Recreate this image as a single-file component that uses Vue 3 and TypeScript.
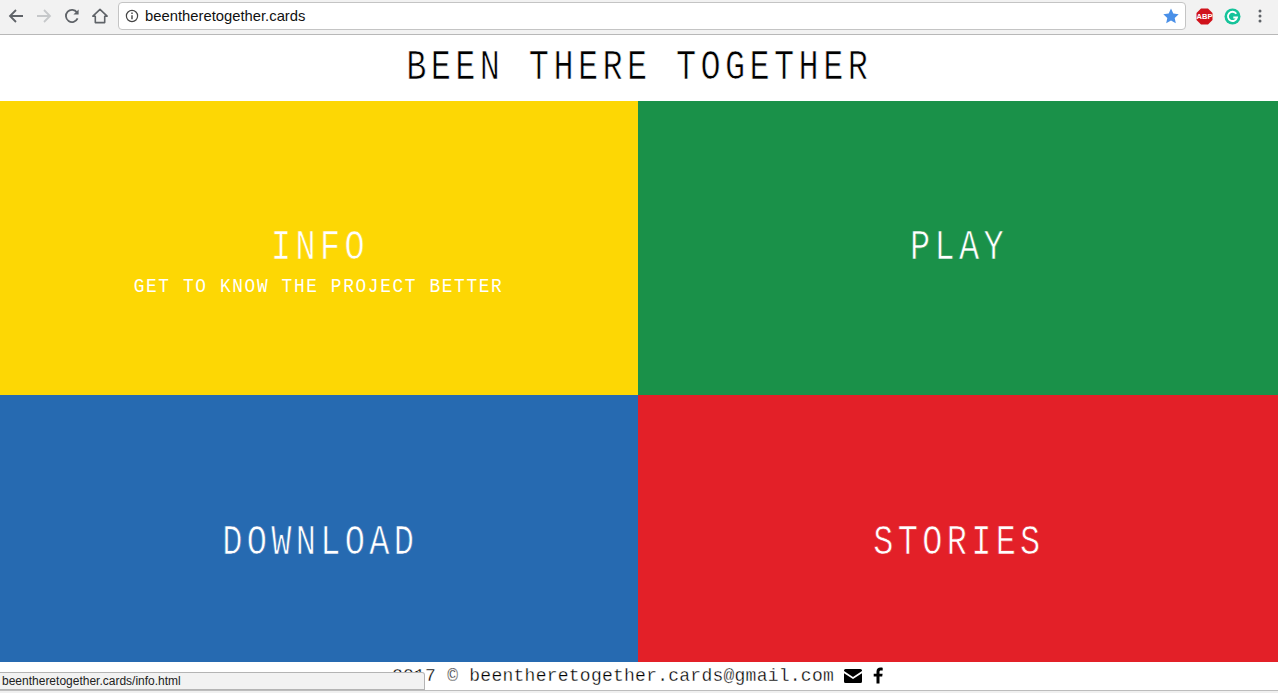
<script setup lang="ts">
interface Tile { title: string; sub?: string; tone: string }
const tiles: Tile[] = [
  { title: 'INFO', sub: 'GET TO KNOW THE PROJECT BETTER', tone: 'yellow' },
  { title: 'PLAY', tone: 'green' },
  { title: 'DOWNLOAD', tone: 'blue' },
  { title: 'STORIES', tone: 'red' },
]
</script>

<template>
  <div class="window">
    <div class="toolbar">
      <div class="nav">
        <svg width="16" height="16" viewBox="0 0 16 16"><path d="M15 8H2.500M8 2 2 8l6 6" fill="none" stroke="#5f6368" stroke-width="1.800"/></svg>
        <svg width="16" height="16" viewBox="0 0 16 16"><path d="M1 8h12.500M8 2l6 6-6 6" fill="none" stroke="#c6c8ca" stroke-width="1.800"/></svg>
        <svg width="16" height="16" viewBox="0 0 16 16"><path d="M13.600 10.400A6.100 6.100 0 1 1 13 4.400" fill="none" stroke="#5f6368" stroke-width="1.800"/><path d="M14.600 1.400v5.200H9.400z" fill="#5f6368"/></svg>
        <svg width="16" height="16" viewBox="0 0 16 16"><path d="M8 1.400.9 8.200h2.400v6.400h9.400V8.200h2.400z" fill="none" stroke="#5f6368" stroke-width="1.600" stroke-linejoin="round"/></svg>
      </div>
      <div class="omnibox">
        <svg width="14" height="14" viewBox="0 0 14 14"><circle cx="7" cy="7" r="5.600" fill="none" stroke="#444" stroke-width="1.200"/><path d="M7 6.200v4M7 3.600v1.500" stroke="#444" stroke-width="1.400"/></svg>
        <span class="url">beentheretogether.cards</span>
        <svg class="star" width="16" height="16" viewBox="0 0 16 16"><path d="M8 .6l2.300 5 5.400.6-4 3.700 1.100 5.400L8 12.600l-4.800 2.700 1.100-5.400-4-3.700 5.400-.6z" fill="#4a90e8"/></svg>
      </div>
      <div class="extensions">
        <svg width="17" height="17" viewBox="0 0 17 17"><path d="M5 .5h7L16.500 5v7L12 16.500H5L.5 12V5z" fill="#d0121b"/><text x="8.500" y="11.300" text-anchor="middle" class="abp">ABP</text></svg>
        <svg width="17" height="17" viewBox="0 0 17 17"><circle cx="8.500" cy="8.500" r="8" fill="#15c39a"/><path d="M12.300 5.700A4.600 4.600 0 1 0 13 9.500H9.300" fill="none" stroke="#fff" stroke-width="1.800"/></svg>
        <svg class="menu" width="4" height="14" viewBox="0 0 4 14"><circle cx="2" cy="2" r="1.500" fill="#5f6368"/><circle cx="2" cy="7" r="1.500" fill="#5f6368"/><circle cx="2" cy="12" r="1.500" fill="#5f6368"/></svg>
      </div>
    </div>

    <div class="page">
      <header class="site-head"><h1 class="narrow">BEEN THERE TOGETHER</h1></header>
      <main class="tiles">
        <a v-for="t in tiles" :key="t.title" class="tile" :class="t.tone">
          <span class="tile-title narrow">{{ t.title }}</span>
          <span v-if="t.sub" class="tile-sub"><span class="sub-text">{{ t.sub }}</span></span>
        </a>
      </main>
      <footer class="foot">
        <span class="mail">2017 © beentheretogether.cards@gmail.com</span>
        <svg width="18" height="14" viewBox="0 0 18 14"><path d="M1.500 0h15A1.500 1.500 0 0 1 18 1.500v.6L9 8 0 2.100v-.6A1.500 1.500 0 0 1 1.500 0z" fill="#000"/><path d="M0 4.200 9 10l9-5.800v8.300a1.500 1.500 0 0 1-1.500 1.500h-15A1.500 1.500 0 0 1 0 12.500z" fill="#000"/></svg>
        <svg class="fb" width="10" height="17" viewBox="0 0 10 16"><path d="M6.500 16V9h2.700l.4-2.800H6.500V4.500c0-.8.3-1.400 1.500-1.400h1.700V.3C9.400.2 8.500.1 7.500.1 5.100.1 3.500 1.500 3.500 4.100v2.100H.7V9h2.800v7z" fill="#000"/></svg>
      </footer>
      <div class="status">beentheretogether.cards/info.html</div>
    </div>
  </div>
</template>

<style>
html, body { margin: 0; overflow: hidden; background: #fff; }
</style>

<style scoped>
.window { height: 693px; display: flex; flex-direction: column; overflow: hidden; font-family: "Liberation Mono", monospace; }
.toolbar { height: 34px; flex: none; box-sizing: border-box; background: #f2f2f2; display: flex; align-items: center; padding: 0 16px 2px 8px; }
.nav { display: flex; align-items: center; gap: 12px; width: 110px; flex: none; }
.omnibox { flex: 1; height: 28px; box-sizing: border-box; background: #fff; border: 1px solid #c4c4c4; border-radius: 4px; display: flex; align-items: center; padding: 0 6px; gap: 6px; }
.url { font: 14.800px "Liberation Sans", Arial, sans-serif; color: #111; flex: 1; }
.extensions { display: flex; align-items: center; gap: 11px; margin-left: 10px; }
.menu { margin-left: 6px; }
.abp { font: bold 7.500px "Liberation Sans", Arial, sans-serif; fill: #fff; }
.page { flex: 1; position: relative; border-top: 1px solid #b8b8b8; min-height: 0; }
.site-head { height: 66px; display: flex; align-items: center; justify-content: center; background: #fff; }
h1 { margin: 0; padding-right: 0; font-weight: 400; font-size: 42px; letter-spacing: 5.450px; color: #000; white-space: nowrap; -webkit-text-stroke: .7px #fff; }
.narrow { display: inline-block; transform: scaleX(.8); }
.tiles { display: grid; grid-template-columns: 638px 640px; grid-template-rows: 294px 296px; }
.tile { position: relative; display: flex; align-items: center; justify-content: center; color: #fff; }
.yellow { background: #fdd704; -webkit-text-stroke-color: #fdd704; }
.green { background: #1a9149; -webkit-text-stroke-color: #1a9149; }
.blue { background: #266ab1; -webkit-text-stroke-color: #266ab1; }
.red { background: #e32028; -webkit-text-stroke-color: #e32028; }
.tile-title { padding-left: 2px; font-size: 42px; letter-spacing: 5.400px; white-space: nowrap; -webkit-text-stroke-width: .7px; }
.tile-sub { position: absolute; left: 0; right: 0; top: 174px; display: flex; justify-content: center; font-size: 21px; white-space: nowrap; -webkit-text-stroke-width: 0; }
.sub-text { display: inline-block; transform: scaleX(.85); letter-spacing: 1.900px; }
.foot { position: absolute; left: 0; right: 0; bottom: 3px; height: 28px; background: #fff; display: flex; align-items: center; justify-content: center; gap: 10px; padding-right: 3px; color: #000; }
.fb { margin-left: 1px; margin-top: -2px; }
.mail { font-size: 18px; letter-spacing: .25px; -webkit-text-stroke: .3px #fff; }
.status { position: absolute; left: 0; bottom: 3px; width: 425px; height: 18px; box-sizing: border-box; background: #f2f2f2; border: 1px solid #b4b4b4; border-left: 0; border-top-right-radius: 3px; font: 12px/17px "Liberation Sans", Arial, sans-serif; color: #222; padding-left: 2px; }
.page::after { content: ""; position: absolute; left: 0; right: 0; bottom: 0; height: 3px; box-sizing: border-box; background: #f0f0f0; border-top: 1px solid #bdbdbd; }
</style>
